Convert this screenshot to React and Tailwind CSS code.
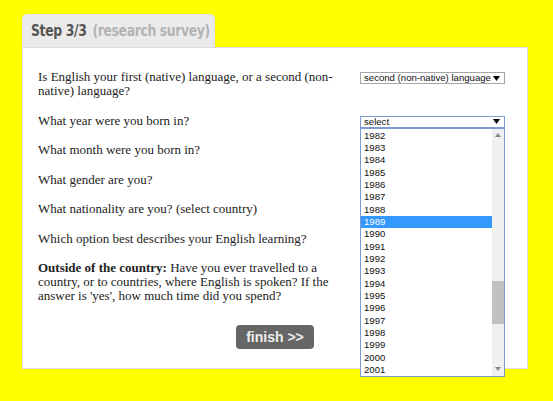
const years = []
for (let y = 1982; y <= 2001; y++) years.push(y)

const questions = [
  { text: 'Is English your first (native) language, or a second (non-native) language?', select: 'second (non-native) language' },
  { text: 'What year were you born in?', select: 'select', open: true },
  { text: 'What month were you born in?' },
  { text: 'What gender are you?' },
  { text: 'What nationality are you? (select country)' },
  { text: 'Which option best describes your English learning?' },
]

function Arrow() {
  return (
    <svg width="7" height="5" viewBox="0 0 7 5" className="shrink-0">
      <path d="M0 0 H7 L3.5 5 Z" fill="#000" />
    </svg>
  )
}

function YearList() {
  return (
    <div className="absolute left-0 top-[12px] z-10 w-[145px] h-[249px] border border-[#7a9cd3] bg-white flex">
      <div className="flex-1 pt-px">
        {years.map(y => (
          <div
            key={y}
            className={`h-[12.35px] leading-[12.35px] pl-[3px] ${y === 1989 ? 'bg-[#3399ff] text-white' : 'text-[#111]'}`}
          >
            {y}
          </div>
        ))}
      </div>
      {/* scrollbar */}
      <div className="w-[12px] bg-[#f0f0f0] flex flex-col items-center">
        <div className="h-[13px] flex items-center justify-center">
          <svg width="6" height="4" viewBox="0 0 6 4"><path d="M0 4 H6 L3 0 Z" fill="#888" /></svg>
        </div>
        <div className="flex-1 w-full relative">
          <div className="absolute left-0 right-0 top-[139px] h-[43px] bg-[#c1c1c1]" />
        </div>
        <div className="h-[13px] flex items-center justify-center">
          <svg width="6" height="4" viewBox="0 0 6 4"><path d="M0 0 H6 L3 4 Z" fill="#888" /></svg>
        </div>
      </div>
    </div>
  )
}

export default function App() {
  return (
    <div className="w-[553px] h-[401px] bg-[#ffff00] pt-[14px] pl-[22px] overflow-hidden">
      {/* tab */}
      <div className="w-[193px] h-[33px] bg-[#ebebeb] rounded-t-[5px] border border-b-0 border-[#e0e0e0] flex items-center pl-[8px] whitespace-nowrap font-['DejaVu_Sans_Condensed','Liberation_Sans',sans-serif] font-bold text-[16px] tracking-[-0.4px]">
        <span className="inline-flex gap-[7px] scale-x-[0.86] origin-left">
          <span className="text-[#555]">Step 3/3</span>
          <span className="text-[#b3b3b3]">(research survey)</span>
        </span>
      </div>
      {/* card */}
      <div className="w-[506px] h-[322px] bg-white border border-[#dcdcdc] pt-[22px] pl-[15px] font-['Liberation_Serif','Times_New_Roman',serif] text-[13px] leading-[14px] text-[#222]">
        <div className="flex flex-col gap-[15.5px]">
          {questions.map((q, i) => (
            <div key={i} className="flex">
              <div className="w-[310px] shrink-0">{q.text}</div>
              {q.select && (
                <div className="ml-[12px] relative mt-[2px] font-['Liberation_Sans',Arial,sans-serif] text-[9.6px] leading-[10px]">
                  <div className={`w-[145px] h-[12px] border flex items-center justify-between pl-[3px] pr-[4px] bg-white text-[#111] whitespace-nowrap ${q.open ? 'border-[#7a9cd3]' : 'border-[#a5a5a5]'}`}>
                    <span>{q.select}</span>
                    <Arrow />
                  </div>
                  {q.open && <YearList />}
                </div>
              )}
            </div>
          ))}
          <div className="w-[310px]">
            <b>Outside of the country:</b> Have you ever travelled to a country, or to countries, where English is spoken? If the answer is 'yes', how much time did you spend?
          </div>
        </div>
        <div className="mt-[22px] pr-[15px] flex justify-center">
          <button className="w-[78px] h-[24px] bg-[#666] rounded-[4px] text-[#eee] font-bold text-[14px] font-['Liberation_Sans',Arial,sans-serif]">
            finish &gt;&gt;
          </button>
        </div>
      </div>
    </div>
  )
}
